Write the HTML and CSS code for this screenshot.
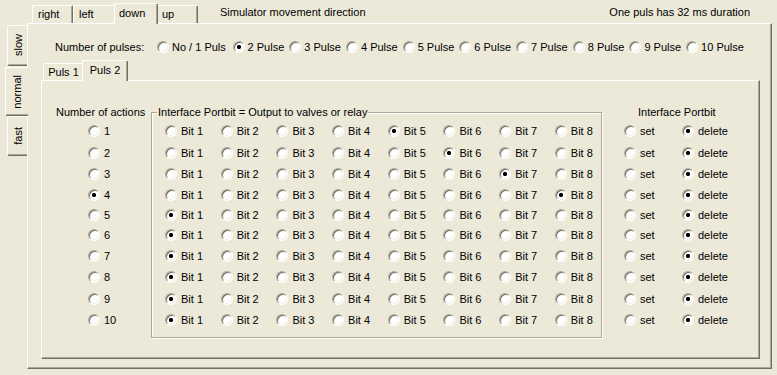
FILE: index.html
```html
<!DOCTYPE html>
<html lang="en">
<head>
    <meta charset="UTF-8">
    <meta name="viewport" content="width=device-width, initial-scale=1.0">
    <link rel="stylesheet" href="styles.css">
    <title>Simulator</title>
</head>
<body>
    <div class="topbar">
        <div class="dirtabs">
            <div class="tab t-right">right</div>
            <div class="tab t-left">left</div>
            <div class="tab t-down active">down</div>
            <div class="tab t-up">up</div>
        </div>
        <span class="caption">Simulator movement direction</span>
        <span class="duration">One puls has 32 ms duration</span>
    </div>

    <div class="main">
        <div class="speedtabs">
            <div class="vtab v-slow"><span>slow</span></div>
            <div class="vtab v-normal active"><span>normal</span></div>
            <div class="vtab v-fast"><span>fast</span></div>
        </div>

        <div class="panel">
            <div class="pulses">
                <span class="pulses-label">Number of pulses:</span>
                <label class="opt first"><input type="radio" name="pulses"> No / 1 Puls</label>
                <label class="opt"><input type="radio" name="pulses" checked> 2 Pulse</label>
                <label class="opt"><input type="radio" name="pulses"> 3 Pulse</label>
                <label class="opt"><input type="radio" name="pulses"> 4 Pulse</label>
                <label class="opt"><input type="radio" name="pulses"> 5 Pulse</label>
                <label class="opt"><input type="radio" name="pulses"> 6 Pulse</label>
                <label class="opt"><input type="radio" name="pulses"> 7 Pulse</label>
                <label class="opt"><input type="radio" name="pulses"> 8 Pulse</label>
                <label class="opt"><input type="radio" name="pulses"> 9 Pulse</label>
                <label class="opt"><input type="radio" name="pulses"> 10 Pulse</label>
            </div>

            <div class="pulstabs">
                <div class="tab p-one">Puls 1</div>
                <div class="tab p-two active">Puls 2</div>
            </div>

            <div class="inner">
                <div class="actions">
                    <div class="head">Number of actions</div>
                    <div class="rows">
                        <label><input type="radio" name="act"> 1</label>
                        <label><input type="radio" name="act"> 2</label>
                        <label><input type="radio" name="act"> 3</label>
                        <label><input type="radio" name="act" checked> 4</label>
                        <label><input type="radio" name="act"> 5</label>
                        <label><input type="radio" name="act"> 6</label>
                        <label><input type="radio" name="act"> 7</label>
                        <label><input type="radio" name="act"> 8</label>
                        <label><input type="radio" name="act"> 9</label>
                        <label><input type="radio" name="act"> 10</label>
                    </div>
                </div>

                <fieldset class="portbits">
                    <legend>Interface Portbit = Output to valves or relay</legend>
                    <div class="bitgrid">
                        <label><input type="radio" name="b1"> Bit 1</label>
                        <label><input type="radio" name="b1"> Bit 2</label>
                        <label><input type="radio" name="b1"> Bit 3</label>
                        <label><input type="radio" name="b1"> Bit 4</label>
                        <label><input type="radio" name="b1" checked> Bit 5</label>
                        <label><input type="radio" name="b1"> Bit 6</label>
                        <label><input type="radio" name="b1"> Bit 7</label>
                        <label><input type="radio" name="b1"> Bit 8</label>

                        <label><input type="radio" name="b2"> Bit 1</label>
                        <label><input type="radio" name="b2"> Bit 2</label>
                        <label><input type="radio" name="b2"> Bit 3</label>
                        <label><input type="radio" name="b2"> Bit 4</label>
                        <label><input type="radio" name="b2"> Bit 5</label>
                        <label><input type="radio" name="b2" checked> Bit 6</label>
                        <label><input type="radio" name="b2"> Bit 7</label>
                        <label><input type="radio" name="b2"> Bit 8</label>

                        <label><input type="radio" name="b3"> Bit 1</label>
                        <label><input type="radio" name="b3"> Bit 2</label>
                        <label><input type="radio" name="b3"> Bit 3</label>
                        <label><input type="radio" name="b3"> Bit 4</label>
                        <label><input type="radio" name="b3"> Bit 5</label>
                        <label><input type="radio" name="b3"> Bit 6</label>
                        <label><input type="radio" name="b3" checked> Bit 7</label>
                        <label><input type="radio" name="b3"> Bit 8</label>

                        <label><input type="radio" name="b4"> Bit 1</label>
                        <label><input type="radio" name="b4"> Bit 2</label>
                        <label><input type="radio" name="b4"> Bit 3</label>
                        <label><input type="radio" name="b4"> Bit 4</label>
                        <label><input type="radio" name="b4"> Bit 5</label>
                        <label><input type="radio" name="b4"> Bit 6</label>
                        <label><input type="radio" name="b4"> Bit 7</label>
                        <label><input type="radio" name="b4" checked> Bit 8</label>

                        <label><input type="radio" name="b5" checked> Bit 1</label>
                        <label><input type="radio" name="b5"> Bit 2</label>
                        <label><input type="radio" name="b5"> Bit 3</label>
                        <label><input type="radio" name="b5"> Bit 4</label>
                        <label><input type="radio" name="b5"> Bit 5</label>
                        <label><input type="radio" name="b5"> Bit 6</label>
                        <label><input type="radio" name="b5"> Bit 7</label>
                        <label><input type="radio" name="b5"> Bit 8</label>

                        <label><input type="radio" name="b6" checked> Bit 1</label>
                        <label><input type="radio" name="b6"> Bit 2</label>
                        <label><input type="radio" name="b6"> Bit 3</label>
                        <label><input type="radio" name="b6"> Bit 4</label>
                        <label><input type="radio" name="b6"> Bit 5</label>
                        <label><input type="radio" name="b6"> Bit 6</label>
                        <label><input type="radio" name="b6"> Bit 7</label>
                        <label><input type="radio" name="b6"> Bit 8</label>

                        <label><input type="radio" name="b7" checked> Bit 1</label>
                        <label><input type="radio" name="b7"> Bit 2</label>
                        <label><input type="radio" name="b7"> Bit 3</label>
                        <label><input type="radio" name="b7"> Bit 4</label>
                        <label><input type="radio" name="b7"> Bit 5</label>
                        <label><input type="radio" name="b7"> Bit 6</label>
                        <label><input type="radio" name="b7"> Bit 7</label>
                        <label><input type="radio" name="b7"> Bit 8</label>

                        <label><input type="radio" name="b8" checked> Bit 1</label>
                        <label><input type="radio" name="b8"> Bit 2</label>
                        <label><input type="radio" name="b8"> Bit 3</label>
                        <label><input type="radio" name="b8"> Bit 4</label>
                        <label><input type="radio" name="b8"> Bit 5</label>
                        <label><input type="radio" name="b8"> Bit 6</label>
                        <label><input type="radio" name="b8"> Bit 7</label>
                        <label><input type="radio" name="b8"> Bit 8</label>

                        <label><input type="radio" name="b9" checked> Bit 1</label>
                        <label><input type="radio" name="b9"> Bit 2</label>
                        <label><input type="radio" name="b9"> Bit 3</label>
                        <label><input type="radio" name="b9"> Bit 4</label>
                        <label><input type="radio" name="b9"> Bit 5</label>
                        <label><input type="radio" name="b9"> Bit 6</label>
                        <label><input type="radio" name="b9"> Bit 7</label>
                        <label><input type="radio" name="b9"> Bit 8</label>

                        <label><input type="radio" name="b10" checked> Bit 1</label>
                        <label><input type="radio" name="b10"> Bit 2</label>
                        <label><input type="radio" name="b10"> Bit 3</label>
                        <label><input type="radio" name="b10"> Bit 4</label>
                        <label><input type="radio" name="b10"> Bit 5</label>
                        <label><input type="radio" name="b10"> Bit 6</label>
                        <label><input type="radio" name="b10"> Bit 7</label>
                        <label><input type="radio" name="b10"> Bit 8</label>
                    </div>
                </fieldset>

                <div class="setdel">
                    <div class="head">Interface Portbit</div>
                    <div class="setgrid">
                        <label><input type="radio" name="s1"> set</label>
                        <label><input type="radio" name="s1" checked> delete</label>
                        <label><input type="radio" name="s2"> set</label>
                        <label><input type="radio" name="s2" checked> delete</label>
                        <label><input type="radio" name="s3"> set</label>
                        <label><input type="radio" name="s3" checked> delete</label>
                        <label><input type="radio" name="s4"> set</label>
                        <label><input type="radio" name="s4" checked> delete</label>
                        <label><input type="radio" name="s5"> set</label>
                        <label><input type="radio" name="s5" checked> delete</label>
                        <label><input type="radio" name="s6"> set</label>
                        <label><input type="radio" name="s6" checked> delete</label>
                        <label><input type="radio" name="s7"> set</label>
                        <label><input type="radio" name="s7" checked> delete</label>
                        <label><input type="radio" name="s8"> set</label>
                        <label><input type="radio" name="s8" checked> delete</label>
                        <label><input type="radio" name="s9"> set</label>
                        <label><input type="radio" name="s9" checked> delete</label>
                        <label><input type="radio" name="s10"> set</label>
                        <label><input type="radio" name="s10" checked> delete</label>
                    </div>
                </div>
            </div>
        </div>
    </div>
</body>
</html>
```

FILE: styles.css
```css
body{ margin: 0; background: #ece9d8; color: #000; font: 11px "Liberation Sans", Arial, sans-serif; }

/* classic 3d tabs */
.tab{ box-sizing: border-box; background: #ece9d8; border-top: 1px solid #fff; border-left: 1px solid #fff; border-right: 1px solid #716f64; box-shadow: inset -1px 0 #aca899; border-radius: 2px 2px 0 0; white-space: nowrap; }
.tab.active{ position: relative; z-index: 1; }

.topbar{ display: flex; height: 23px; }
.dirtabs{ display: flex; align-items: flex-end; margin-left: 32px; }
.dirtabs .tab{ height: 18px; line-height: 17px; padding-left: 5px; }
.dirtabs .tab.active{ height: 21px; line-height: 18px; margin: 0 -2px -1px; padding-left: 4px; }
.t-right{ width: 41px; }
.t-left{ width: 43px; }
.t-down{ width: 44px; }
.t-up{ width: 42px; padding-left: 6px; }
.caption{ align-self: center; padding-top: 1px; margin-left: 22px; }
.duration{ align-self: center; padding-top: 1px; margin-left: auto; margin-right: 27px; }

.main{ display: flex; }
.speedtabs{ width: 27px; padding-top: 2px; display: flex; flex-direction: column; align-items: flex-end; }
.vtab{ width: 20px; box-sizing: border-box; background: #ece9d8; border-left: 1px solid #fff; border-top: 1px solid #fff; border-bottom: 1px solid #716f64; box-shadow: inset 0 -1px #aca899; border-radius: 2px 0 0 2px; display: flex; align-items: center; justify-content: center; }
.vtab span{ writing-mode: vertical-rl; transform: rotate(180deg); }
.v-slow{ height: 41px; margin-bottom: 1px; }
.v-normal{ height: 49px; width: 23px; margin-right: -1px; position: relative; z-index: 1; }
.v-fast{ height: 40px; }

.panel, .inner{ box-sizing: border-box; border: 1px solid #fff; border-right-color: #716f64; border-bottom-color: #716f64; box-shadow: inset -1px -1px #aca899; }
.panel{ width: 745px; height: 346px; padding: 16px 0 0 13px; }

.pulses{ display: flex; align-items: center; height: 14px; margin-left: 14px; }
.pulses-label{ width: 102px; white-space: nowrap; }
.opt{ width: 56.7px; gap: 3px; }
.opt.first{ width: 75.6px; }

.pulstabs{ display: flex; align-items: flex-end; height: 20px; margin: 6px 0 0 2px; }
.pulstabs .tab{ height: 17px; line-height: 16px; text-align: center; }
.pulstabs .tab.active{ height: 21px; line-height: 18px; margin: 0 -2px -1px; }
.p-one{ width: 41px; }
.p-two{ width: 46px; }

.inner{ width: 719px; height: 279px; display: flex; align-items: flex-start; padding: 25px 0 0 14px; }
.head{ height: 14px; line-height: 13px; white-space: nowrap; }
.actions{ width: 95px; }
.rows, .bitgrid, .setgrid{ display: grid; grid-template-rows: 22px 21px 21px 21px 20px 20px 21px 22px 21px 21px; }
.rows{ padding-left: 32px; }

.portbits{ margin: 0; min-width: 0; width: 451px; box-sizing: border-box; padding: 1px 0 7px 5px; border: 1px solid #aca899; box-shadow: 1px 1px #fff, inset 1px 1px #fff; }
.portbits legend{ padding: 0 1px; line-height: 13px; background: #ece9d8; }
.bitgrid{ grid-template-columns: repeat(8, 55.7px); padding-left: 8px; }

.setdel{ padding-left: 22px; }
.setdel .head{ margin-left: 14px; }
.setgrid{ grid-template-columns: 58px auto; }

label{ display: flex; align-items: center; gap: 4px; white-space: nowrap; }
input[type="radio"]{ appearance: none; -webkit-appearance: none; flex: none; width: 12px; height: 12px; margin: 0; border-radius: 50%; border: 1px solid; border-color: #aca899 #fff #fff #aca899; box-shadow: inset 1px 1px #716f64, inset -1px -1px #f1efe2; background: #fff; }
input[type="radio"]:checked{ background: radial-gradient(circle, #000 0 1.8px, #fff 2.4px); }
```
